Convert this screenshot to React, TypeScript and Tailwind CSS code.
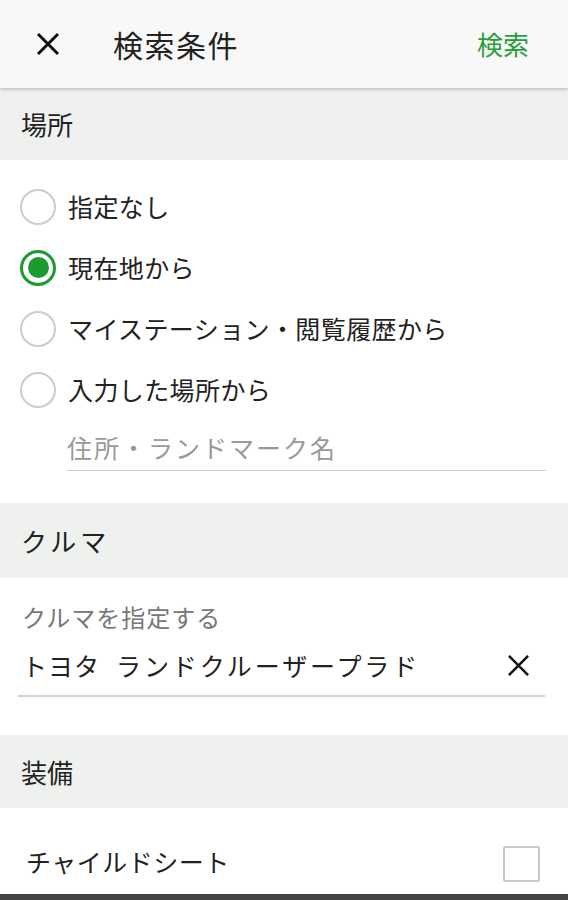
import React from "react";

const font = { fontFamily: '"Noto Sans CJK JP", "Noto Sans", sans-serif' };

function XIcon({ size, stroke }: { size: number; stroke: number }) {
  return (
    <svg width={size} height={size} viewBox="0 0 24 24" fill="none">
      <path d="M2 2 L22 22 M22 2 L2 22" stroke="#111" strokeWidth={stroke} strokeLinecap="butt" />
    </svg>
  );
}

function Radio({ checked, label }: { checked?: boolean; label: string }) {
  return (
    <div className="flex h-[61px] items-center pl-[20px]">
      {checked ? (
        <div className="flex h-[36px] w-[36px] items-center justify-center rounded-full border-[3px] border-[#1e9b30]">
          <div className="h-[21px] w-[21px] rounded-full bg-[#1e9b30]" />
        </div>
      ) : (
        <div className="h-[36px] w-[36px] rounded-full border-[2.5px] border-[#cccccc]" />
      )}
      <span className="ml-[12px] text-[25px] leading-none tracking-[0.4px] text-[#222]">{label}</span>
    </div>
  );
}

function SectionHeader({ title, h, track }: { title: string; h: string; track?: string }) {
  return (
    <div className={`flex items-center bg-[#eff1ef] px-[21px] ${h}`}>
      <span className={`text-[26px] leading-none text-[#222] ${track ?? ""}`}>{title}</span>
    </div>
  );
}

export default function App() {
  return (
    <div className="relative h-[900px] w-[568px] overflow-hidden bg-white" style={font}>
      <div className="relative z-10 flex h-[88px] items-center bg-[#f8f8f8] shadow-[0_2px_3px_rgba(0,0,0,0.18)]">
        <div className="ml-[36px]">
          <XIcon size={24} stroke={3} />
        </div>
        <span className="ml-[53px] text-[30px] leading-none tracking-[1.5px] text-[#222]">検索条件</span>
        <span className="ml-auto mr-[39px] text-[26px] leading-none text-[#2a9d3a]">検索</span>
      </div>

      <SectionHeader title="場所" h="h-[72px]" />
      <div className="pt-[16px] pb-[32px]">
        <Radio label="指定なし" />
        <Radio checked label="現在地から" />
        <Radio label="マイステーション・閲覧履歴から" />
        <Radio label="入力した場所から" />
        <div className="ml-[67px] mr-[22px] flex h-[51px] items-center border-b border-[#cccccc] pt-[4px]">
          <span className="text-[25px] leading-none tracking-[2px] text-[#999]">住所・ランドマーク名</span>
        </div>
      </div>

      <SectionHeader title="クルマ" h="h-[75px]" track="tracking-[4px]" />
      <div className="pl-[18px] pt-[22px] pb-[38px] pr-[23px]">
        <div className="flex h-[34px] items-center pl-[4px]">
          <span className="text-[24px] leading-none tracking-[1px] text-[#777]">クルマを指定する</span>
        </div>
        <div className="flex h-[63px] items-center border-b-2 border-[#d4d4d4] pl-[4px] pt-[2px]">
          <span className="text-[25px] leading-none tracking-[1px] text-[#222]">トヨタ</span>
          <span className="ml-[16px] text-[25px] leading-none tracking-[2.9px] text-[#222]">ランドクルーザープラド</span>
          <div className="ml-auto mr-[15px]">
            <XIcon size={23} stroke={2.6} />
          </div>
        </div>
      </div>

      <SectionHeader title="装備" h="h-[73px]" />
      <div className="flex h-[86px] items-center pl-[26px] pr-[28px] pt-[26px]">
        <span className="-mt-[6px] text-[25px] leading-none tracking-[0.5px] text-[#222]">チャイルドシート</span>
        <div className="ml-auto h-[36px] w-[37px] rounded-[2px] border-2 border-[#c8c8c8]" />
      </div>
      <div className="h-[6px] bg-[#444]" />
    </div>
  );
}
